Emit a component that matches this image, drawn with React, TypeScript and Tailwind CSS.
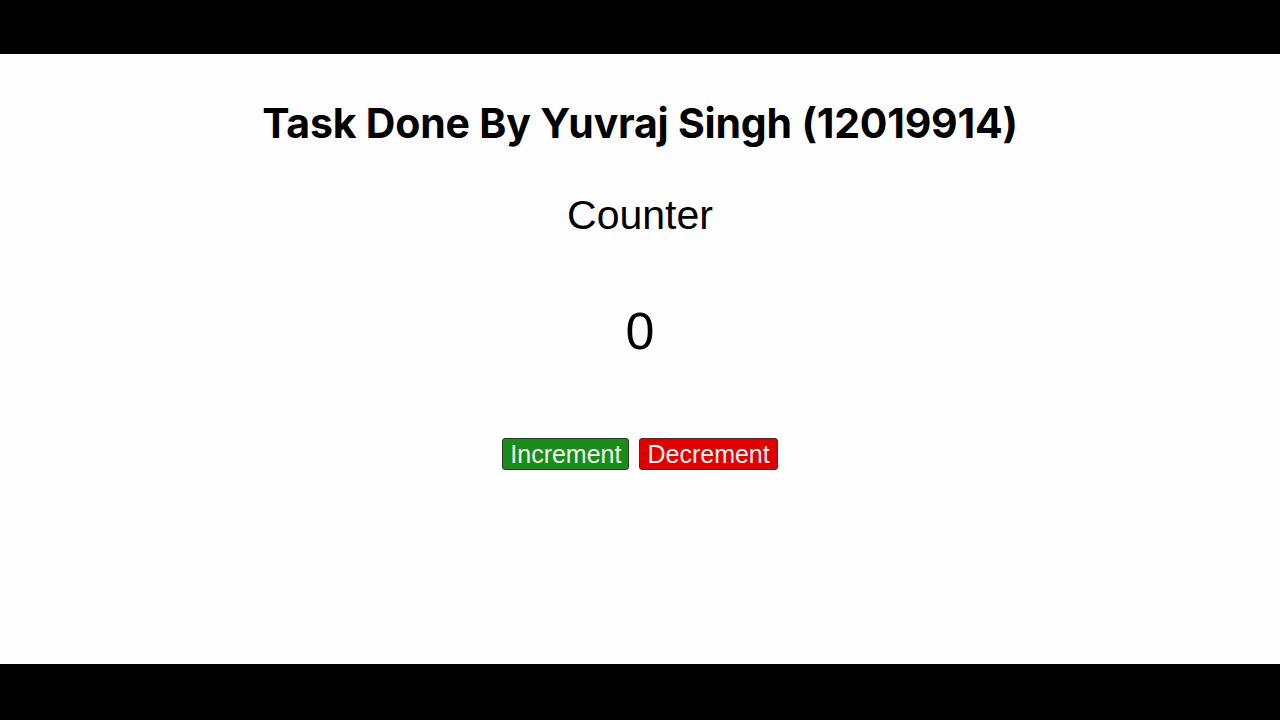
import * as React from "react";

export default function App() {
  const [count, setCount] = React.useState(0);
  return (
    <div className="w-[1280px] h-[720px] bg-black flex flex-col">
      <div className="h-[54px] flex-none" />
      <div className="h-[610px] flex-none bg-[#fefefe] flex flex-col items-center font-['Liberation_Sans',Arial,sans-serif] text-black">
        <h1 className="mt-[45px] text-[41px] leading-[48px] font-bold font-['Inter',sans-serif] tracking-[-0.2px]">
          Task Done By Yuvraj Singh (12019914)
        </h1>
        <h2 className="mt-[44px] text-[41px] leading-[48px]">Counter</h2>
        <div className="mt-[62px] text-[52px] leading-[60px]">{count}</div>
        <div className="mt-[77px] flex gap-[10px]">
          <button
            onClick={() => setCount(count + 1)}
            className="h-[32px] px-[7px] rounded-[3px] border border-[#333] bg-[#1a8c1a] text-[#f2f2f2] text-[25px] leading-none"
          >
            Increment
          </button>
          <button
            onClick={() => setCount(count - 1)}
            className="h-[32px] px-[7px] rounded-[3px] border border-[#333] bg-[#e00000] text-[#f2f2f2] text-[25px] leading-none"
          >
            Decrement
          </button>
        </div>
      </div>
      <div className="flex-1" />
    </div>
  );
}
